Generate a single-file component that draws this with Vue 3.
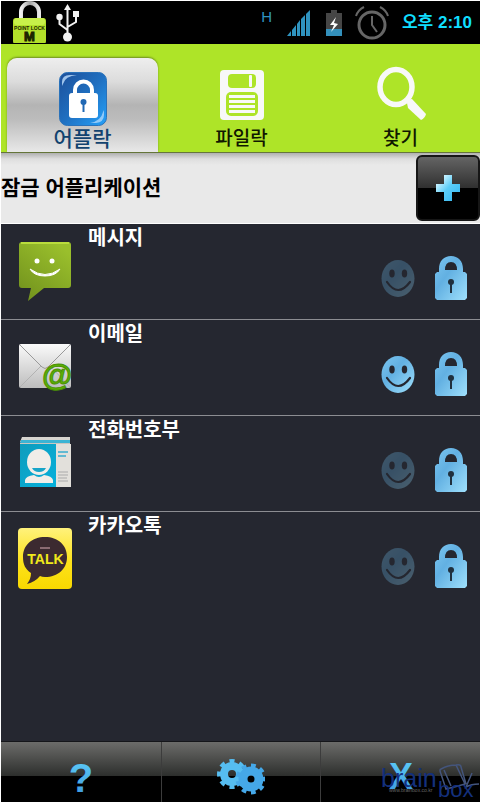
<script setup>
import { ref, reactive } from "vue";

const tabs = [
  { id: "app", label: "어플락" },
  { id: "file", label: "파일락" },
  { id: "search", label: "찾기" },
];
const activeTab = ref("app");

const apps = reactive([
  { id: "message", name: "메시지", fake: false, locked: true },
  { id: "email", name: "이메일", fake: true, locked: true },
  { id: "contacts", name: "전화번호부", fake: false, locked: true },
  { id: "talk", name: "카카오톡", fake: false, locked: true },
]);

const toggle = (app, key) => {
  app[key] = !app[key];
};
</script>

<template>
  <div class="screen">
    <!-- shared gradients -->
    <svg class="defs" width="0" height="0" aria-hidden="true">
      <defs>
        <linearGradient id="sky" x1="0" y1="0" x2="1" y2="1">
          <stop offset="0" stop-color="#7cc6f0" />
          <stop offset="0.4" stop-color="#62b0e2" />
          <stop offset="1" stop-color="#9fe0fc" />
        </linearGradient>
        <linearGradient id="cyan" x1="0" y1="0" x2="0" y2="1">
          <stop offset="0" stop-color="#5fd0fa" />
          <stop offset="1" stop-color="#3b94dc" />
        </linearGradient>
        <linearGradient id="plus" x1="0" y1="0" x2="1" y2="1">
          <stop offset="0.2" stop-color="#c4f0ff" />
          <stop offset="0.5" stop-color="#5ccdf8" />
          <stop offset="1" stop-color="#2fb4f0" />
        </linearGradient>
        <linearGradient id="blue" x1="0" y1="0" x2="1" y2="1">
          <stop offset="0" stop-color="#1d4f9a" />
          <stop offset="0.5" stop-color="#1f6fc0" />
          <stop offset="1" stop-color="#25a2fa" />
        </linearGradient>
        <linearGradient id="metal" x1="0" y1="0" x2="1" y2="0">
          <stop offset="0" stop-color="#f2f2f2" />
          <stop offset="0.5" stop-color="#a5a5a5" />
          <stop offset="1" stop-color="#e8e8e8" />
        </linearGradient>
        <linearGradient id="green" x1="0" y1="1" x2="0.7" y2="0">
          <stop offset="0" stop-color="#6f8f1c" />
          <stop offset="1" stop-color="#9abf2c" />
        </linearGradient>
        <linearGradient id="paper" x1="0" y1="0" x2="0" y2="1">
          <stop offset="0" stop-color="#fafafa" />
          <stop offset="1" stop-color="#bdbdbd" />
        </linearGradient>
        <linearGradient id="teal" x1="0" y1="0" x2="1" y2="1">
          <stop offset="0" stop-color="#0f9cbc" />
          <stop offset="1" stop-color="#04b0dc" />
        </linearGradient>
        <linearGradient id="yellow" x1="0" y1="0" x2="0" y2="1">
          <stop offset="0" stop-color="#fff27c" />
          <stop offset="0.55" stop-color="#fde21c" />
          <stop offset="1" stop-color="#f8d800" />
        </linearGradient>
      </defs>
    </svg>

    <header class="status">
      <div class="status-left">
        <svg width="34" height="42" viewBox="0 0 34 42">
          <path d="M8 18V11a9 9 0 0 1 18 0v7" fill="none" stroke="url(#metal)" stroke-width="4" />
          <rect x="0" y="17" width="33" height="26" rx="3" fill="#b3e02a" />
          <rect x="1" y="17" width="31" height="7" rx="3" fill="#c8f04a" />
          <text x="16.5" y="29" text-anchor="middle" font-size="5" font-weight="bold" fill="#1c2400">POINT LOCK</text>
          <text x="16.5" y="40" text-anchor="middle" font-size="13" font-weight="bold" fill="#1c2400" stroke="#1c2400">M</text>
        </svg>
        <svg width="24" height="40" viewBox="0 0 24 40" fill="none" stroke="#f2f2f2" stroke-width="2">
          <path d="M11.500 33V6M11.500 27L3.500 21v-6M11.500 24l8.500-5v-7" />
          <path d="M11.500 1l3.500 6h-7z" fill="#f2f2f2" stroke="none" />
          <circle cx="11.500" cy="34" r="4.500" fill="#f2f2f2" stroke="none" />
          <circle cx="3.500" cy="14" r="3.200" fill="#f2f2f2" stroke="none" />
          <rect x="17" y="8" width="6" height="6" fill="#f2f2f2" stroke="none" />
        </svg>
      </div>
      <div class="status-right">
        <div class="radio">
          <span class="network">H</span>
          <svg width="24" height="28" viewBox="0 0 24 28" fill="#2f93bf">
            <path d="M0 27l4-5v5zM5 21l4-5v11H5zM10 15l3-4v16h-3zM14 10l4-4v21h-4zM19 5l4-4v26h-4z" />
          </svg>
          <svg width="16" height="28" viewBox="0 0 16 28">
            <path d="M5 1h6v3h5v16H0V4h5z" fill="#464646" />
            <path d="M0 20h16v7H0z" fill="#3390bb" />
            <path d="M10 8L4 16l4 0-3 7 7-8-4-1z" fill="#fff" />
          </svg>
        </div>
        <svg width="34" height="36" viewBox="0 0 34 36" fill="none" stroke="#666" stroke-width="3">
          <circle cx="17" cy="20" r="13" />
          <path d="M17 11v9l5 7" stroke-width="2" />
          <path d="M1 11Q3 5 9 2M33 11Q31 5 25 2" stroke-width="2" />
        </svg>
        <time class="clock">오후 2:10</time>
      </div>
    </header>

    <nav class="tabs">
      <button
        v-for="tab in tabs"
        :key="tab.id"
        class="tab"
        :class="{ active: tab.id === activeTab }"
        type="button"
        @click="activeTab = tab.id"
      >
        <svg width="60" height="60" viewBox="0 0 60 60">
          <g v-if="tab.id === 'app'">
            <rect x="6.500" y="6.500" width="47" height="53" rx="8" fill="url(#blue)" stroke="#2a72ba" />
            <path d="M9 20v-4q0-7 8-7h7q-12 1-14 9z" fill="#bfe0ff" opacity="0.8" />
            <path d="M51 44v5q0 7-8 8h-6q11-2 13-11z" fill="#bfe0ff" opacity="0.7" />
            <path d="M22 29v-5a8.500 8.500 0 0 1 17 0v5" fill="none" stroke="#fff" stroke-width="4" />
            <rect x="16" y="27" width="29" height="25" rx="3" fill="#fff" />
            <circle cx="30.500" cy="36" r="3" fill="#2068b4" />
            <path d="M29.500 37h2v9h-2z" fill="#2068b4" />
          </g>
          <g v-else-if="tab.id === 'file'" fill="#f8f8f8">
            <rect x="8" y="4" width="44" height="50" rx="4" />
            <rect x="16" y="8" width="28" height="14" rx="4" fill="#aee428" />
            <rect x="37" y="9" width="3" height="12" rx="1" />
            <rect x="14" y="26" width="32" height="24" rx="5" fill="#aee428" />
            <path d="M17 29h26v3H17zM17 34h26v3H17zM17 39h26v3H17zM17 44h26v3H17z" />
          </g>
          <g v-else>
            <ellipse cx="25" cy="21" rx="16" ry="17.500" fill="none" stroke="#f8f8f8" stroke-width="5.500" />
            <path d="M36 37q0-4 5-4l14 15q-1 4-5 6L37 42z" fill="#f8f8f8" />
          </g>
        </svg>
        <span class="tab-label">{{ tab.label }}</span>
      </button>
    </nav>

    <section class="heading">
      <h1>잠금 어플리케이션</h1>
      <button class="add" type="button" aria-label="추가">
        <svg width="24" height="26" viewBox="0 0 24 26">
          <path d="M8 0h8v9h8v8h-8v9H8v-9H0V9h8z" fill="url(#plus)" />
        </svg>
      </button>
    </section>

    <main class="list">
      <ul>
        <li v-for="app in apps" :key="app.id" class="row">
          <svg class="app-icon" width="60" height="64" viewBox="0 0 60 64">
            <g v-if="app.id === 'message'">
              <path d="M6 2h46q3 0 3 3v40q0 3-3 3H28L12 61l3-13H6q-3 0-3-3V5q0-3 3-3z" fill="url(#green)" />
              <path d="M5 3h48" stroke="#b9dc3c" stroke-width="2" />
              <circle cx="21" cy="21" r="2.500" fill="#fff" />
              <circle cx="36" cy="21" r="2.500" fill="#fff" />
              <path d="M14 29q15 11 30 0-4 7-15 7t-15-7z" fill="#fff" stroke="#fff" />
            </g>
            <g v-else-if="app.id === 'email'">
              <rect x="3" y="8" width="52" height="44" rx="2" fill="url(#paper)" />
              <path d="M4 51l21-21M54 51L34 30" stroke="#b2b2b2" fill="none" />
              <path d="M4 9l22 22q3 3 6 0L54 9" stroke="#999" fill="none" />
              <text x="41" y="50" text-anchor="middle" font-size="31" font-weight="bold" fill="#5cb004" stroke="#4a9006">@</text>
            </g>
            <g v-else-if="app.id === 'contacts'">
              <path d="M6 5h48v5H4z" fill="#d8d5d0" />
              <path d="M5 8h49v3H4z" fill="#3bb4d4" />
              <path d="M4 11h50v3H4z" fill="#c9c6c0" />
              <rect x="39" y="12" width="16" height="43" fill="#e2e0db" />
              <path d="M4 12h36v43H4z" fill="url(#teal)" />
              <ellipse cx="23" cy="30" rx="12" ry="13" fill="#f0ede8" />
              <path d="M16 36h14q-2 4-7 4t-7-4z" fill="#18a5c8" />
              <path d="M9 51v-3q1-4 9-5 5 4 10 0 8 1 9 5v3z" fill="#f0ede8" />
              <path d="M42 20h10M42 24h8" stroke="#62b9d2" stroke-width="2" />
              <path d="M42 40h10M42 43h10M42 46h9M42 49h10" stroke="#aaa" />
            </g>
            <g v-else>
              <rect x="2" y="0" width="54" height="61" rx="4" fill="url(#yellow)" />
              <path d="M29 9c13 0 22 8 22 20s-9 20-22 20q-3 0-5-1-5 6-13 8 4-5 4-11C9 41 7 36 7 29 7 17 16 9 29 9z" fill="#3c2a30" />
              <path d="M24 20h10" stroke="#8b6b72" stroke-width="2" />
              <text x="29.500" y="36" text-anchor="middle" font-size="14" font-weight="bold" fill="#f2e91b">TALK</text>
            </g>
          </svg>
          <span class="app-name">{{ app.name }}</span>
          <button
            class="toggle face"
            :class="{ off: !app.fake }"
            type="button"
            :aria-label="app.name + ' 위장'"
            :aria-pressed="app.fake"
            @click="toggle(app, 'fake')"
          >
            <svg width="34" height="46" viewBox="0 0 34 46">
              <ellipse cx="17" cy="23.500" rx="16.500" ry="18.500" fill="url(#sky)" />
              <ellipse cx="11" cy="18.500" rx="2.700" ry="4" fill="#252730" />
              <ellipse cx="23.500" cy="18.500" rx="2.700" ry="4" fill="#252730" />
              <path d="M6 27q11 16 23 0" fill="none" stroke="#252730" stroke-width="2.200" stroke-linecap="round" />
            </svg>
          </button>
          <button
            class="toggle"
            :class="{ off: !app.locked }"
            type="button"
            :aria-label="app.name + ' 잠금'"
            :aria-pressed="app.locked"
            @click="toggle(app, 'locked')"
          >
            <svg width="34" height="46" viewBox="0 0 34 46">
              <path
                d="M5 17v-3C5 6 10 1 17 1s12 5 12 13v3h2l2 2v24l-2 2H3l-2-2V19l2-2zM11 15h12q0-8-6-8t-6 8z"
                fill="url(#sky)"
                fill-rule="evenodd"
              />
              <circle cx="17" cy="27" r="3" fill="#20303e" />
              <path d="M16 27h2v11h-2z" fill="#20303e" />
            </svg>
          </button>
        </li>
      </ul>
    </main>

    <footer class="toolbar">
      <button type="button" aria-label="도움말">
        <svg width="48" height="54" viewBox="0 0 48 54">
          <text x="24" y="44" text-anchor="middle" font-size="40" font-weight="bold" fill="url(#cyan)">?</text>
        </svg>
      </button>
      <button type="button" aria-label="설정">
        <svg width="48" height="54" viewBox="0 0 48 54" fill="none">
          <g stroke="#56bdf0">
            <circle cx="15" cy="26" r="8" stroke-width="8" />
            <circle cx="15" cy="26" r="12.500" stroke-width="5" pathLength="16" stroke-dasharray="1 1" stroke-dashoffset="0.5" />
          </g>
          <g stroke="#45a8e8">
            <circle cx="34" cy="31" r="8" stroke-width="9" />
            <circle cx="34" cy="31" r="13" stroke-width="5" pathLength="18" stroke-dasharray="1 1" stroke-dashoffset="0.5" />
          </g>
        </svg>
      </button>
      <button type="button" aria-label="닫기">
        <svg width="48" height="54" viewBox="0 0 48 54">
          <text x="24" y="41" text-anchor="middle" font-size="36" font-weight="bold" fill="url(#cyan)">X</text>
        </svg>
      </button>
      <svg class="watermark" width="100" height="42" viewBox="0 0 100 42">
        <g fill="none" stroke="#44557c" stroke-width="1.500">
          <path d="M61 9q-2 0 0 5l5 15q9-2 19-5L76 5q-8 0-15 4zM64 10l7 16M76 5q5-1 5 2l5 17M92 13l-6 14q5-3 13-3" />
        </g>
        <text x="1" y="27" font-size="25" fill="#14307c">brain</text>
        <text x="58" y="37" font-size="22" fill="#14307c">box</text>
        <text x="9" y="32" font-size="5" fill="#666">www.brainbox.co.kr</text>
      </svg>
    </footer>
  </div>
</template>

<style>
body {
  margin: 0;
  background: #fff;
}
</style>

<style scoped>
.screen {
  display: flex;
  flex-direction: column;
  box-sizing: border-box;
  min-height: 100vh;
  padding: 1px 2px 1px 1px;
  font-family: "Liberation Sans", "Noto Sans CJK KR", sans-serif;
}

.defs {
  position: absolute;
}

svg {
  display: block;
  flex: none;
}

button {
  padding: 0;
  border: 0;
  background: none;
  font-family: inherit;
  cursor: pointer;
}

.status {
  display: flex;
  justify-content: space-between;
  height: 43px;
  background: #000;
}

.status-left {
  display: flex;
  gap: 9px;
  padding-left: 12px;
}

.status-left svg:last-child {
  margin-top: 2px;
}

.status-right {
  display: flex;
  align-items: center;
  gap: 13px;
  padding-right: 8px;
}

.radio {
  display: flex;
  align-items: center;
  gap: 15px;
}

.network {
  align-self: flex-start;
  color: #2f93bf;
  font-size: 15px;
  line-height: 16px;
}

.clock {
  color: #10dfff;
  font-size: 17px;
  font-weight: bold;
  line-height: 24px;
}

.tabs {
  display: grid;
  grid-template-columns: repeat(3, 1fr);
  height: 108px;
  padding-left: 2px;
  background: #aee428;
  border-bottom: 1px solid #66753c;
}

.tab {
  display: flex;
  flex-direction: column;
  align-items: center;
  justify-content: flex-end;
  gap: 1px;
  margin: 14px 4px 0;
  padding-bottom: 1px;
  color: #101800;
}

.tab.active {
  border-radius: 10px 10px 0 0;
  background: linear-gradient(#eee, #dcdcdc 25%, #b4b4b4 50%, #bcbcbc 65%, #e8e8e8);
  box-shadow: 0 -1px 2px #6d8c22;
  color: #12436f;
}

.tab-label {
  font-size: 19px;
  font-weight: 500;
  line-height: 24px;
}

.active .tab-label {
  font-size: 21px;
}

.heading {
  display: flex;
  align-items: center;
  justify-content: space-between;
  height: 70px;
  background: linear-gradient(#b0b0b0, #dedede 6px, #e9e9e9 12px);
  border-bottom: 1px solid #fff;
}

.heading h1 {
  margin: 0;
  color: #000;
  font-size: 21px;
  line-height: 24px;
}

.add {
  display: flex;
  align-items: center;
  justify-content: center;
  width: 64px;
  height: 66px;
  border: 2px solid #161616;
  border-radius: 6px;
  background: linear-gradient(#646464, #303030 50%, #000 50%);
}

.list {
  flex: 1;
  background: #252730;
}

.list ul {
  margin: 0;
  padding: 0;
  list-style: none;
}

.row {
  display: flex;
  align-items: flex-start;
  box-sizing: border-box;
  height: 96px;
  padding: 0 12px 0 15px;
  border-bottom: 1px solid #8c8d92;
}

.row:last-child {
  border-bottom: 0;
}

.app-icon {
  margin-top: 16px;
}

.app-name {
  flex: 1;
  margin: 2px 0 0 12px;
  color: #fff;
  font-size: 20px;
  font-weight: bold;
  line-height: 24px;
}

.toggle {
  margin-top: 31px;
}

.toggle.off {
  opacity: 0.3;
}

.face {
  margin-right: 19px;
}

.toolbar {
  position: relative;
  display: grid;
  grid-template-columns: repeat(3, 1fr);
  height: 60px;
  border-top: 1px solid #15161a;
  background: linear-gradient(#6c6c6a, #2c2e2c 57%, #000 57%);
}

.toolbar button {
  display: flex;
  align-items: flex-end;
  justify-content: center;
}

.toolbar button + button {
  border-left: 1px solid #3c3c3c;
}

.watermark {
  position: absolute;
  right: 0;
  bottom: 0;
  pointer-events: none;
}
</style>
